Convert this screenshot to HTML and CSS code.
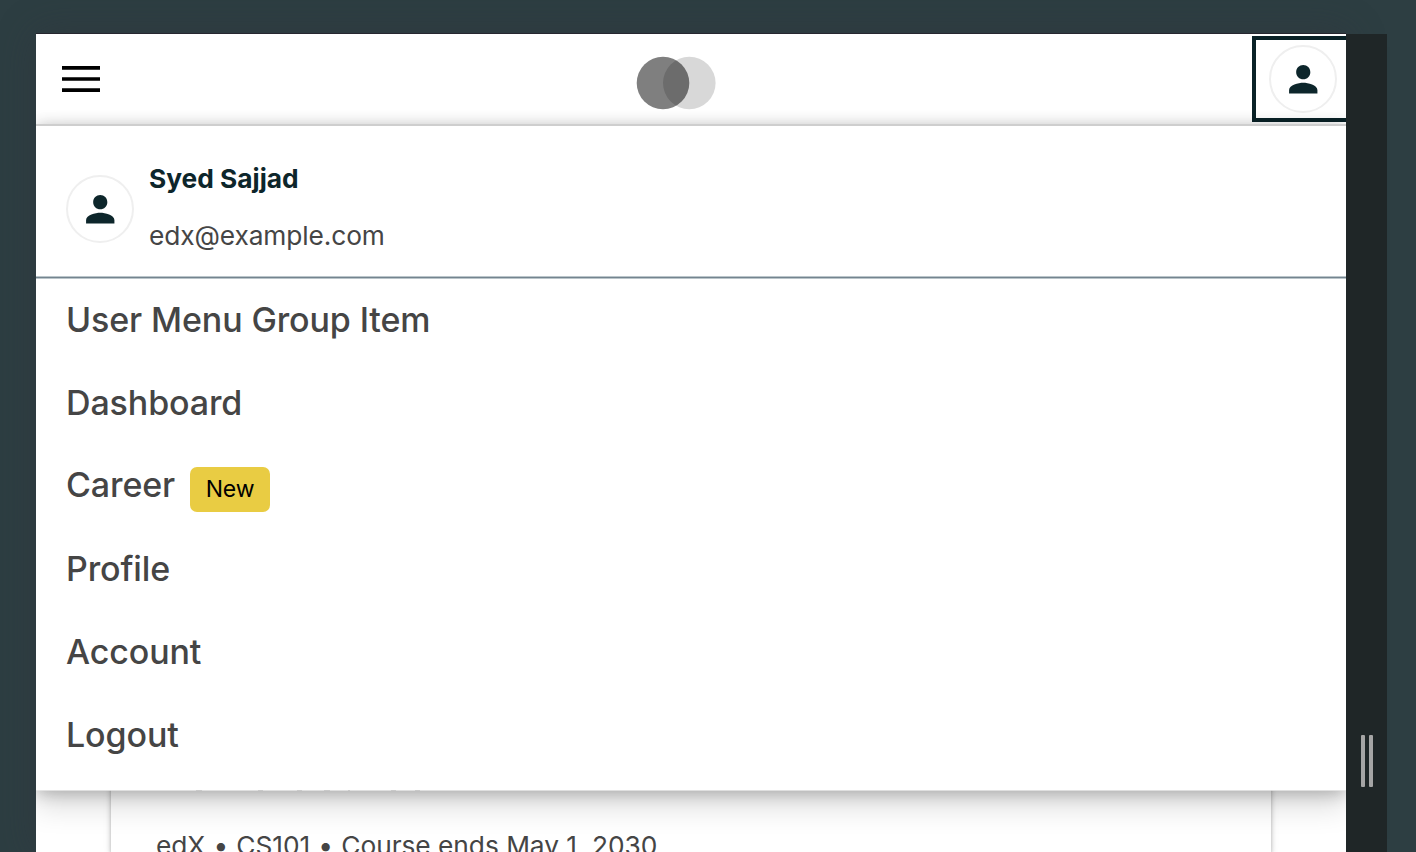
FILE: index.html
```
<!DOCTYPE html>
<html lang="en">
<head>
<meta charset="utf-8">
<title>Dashboard</title>
<link rel="stylesheet" href="styles.css">
</head>
<body>
<div class="stage">
  <div class="device">
    <header class="header">
      <svg class="burger" width="38" height="28" viewBox="0 0 38 28" aria-hidden="true"><path d="M0 2.8h38M0 14h38M0 25.2h38" stroke="#000" stroke-width="3.7"/></svg>
      <svg class="logo" width="80" height="54" viewBox="0 0 80 54" aria-hidden="true"><circle cx="53.3" cy="27" r="26.3" fill="#d8d8d8"/><circle cx="27" cy="27" r="26.3" fill="#000" fill-opacity=".5"/></svg>
      <div class="account-button">
        <div class="avatar"><svg viewBox="0 0 24 24"><path d="M12 12c2.21 0 4-1.79 4-4s-1.79-4-4-4-4 1.79-4 4 1.79 4 4 4zm0 2c-2.67 0-8 1.34-8 4v2h16v-2c0-2.66-5.33-4-8-4z"/></svg></div>
      </div>
    </header>
    <main class="page">
      <section class="card"><svg class="title-edge" width="226" height="1" viewBox="0 0 226 1" aria-hidden="true"><path d="M0 .5h6M62 .5h5M101 .5h5M128 .5h6M152 .5h2M195 .5h5M219 .5h5" stroke="#888"/></svg><p class="course">edX <span class="dot">•</span> CS101 <span class="dot">•</span> Course ends May 1, 2030</p></section>
    </main>
    <nav class="menu">
      <div class="profile">
        <div class="avatar"><svg viewBox="0 0 24 24"><path d="M12 12c2.21 0 4-1.79 4-4s-1.79-4-4-4-4 1.79-4 4 1.79 4 4 4zm0 2c-2.67 0-8 1.34-8 4v2h16v-2c0-2.66-5.33-4-8-4z"/></svg></div>
        <div class="identity"><span class="name">Syed Sajjad</span><span class="email">edx@example.com</span></div>
      </div>
      <ul class="items">
        <li>User Menu Group Item</li>
        <li>Dashboard</li>
        <li class="tagged">Career<span class="badge">New</span></li>
        <li>Profile</li>
        <li>Account</li>
        <li>Logout</li>
      </ul>
    </nav>
  </div>
  <div class="resizer"><span></span><span></span></div>
</div>
</body>
</html>
```
FILE: styles.css
```
* { box-sizing: border-box; }
body {
  margin: 0;
  height: 852px;
  overflow: hidden;
  background: #2d3e42;
  font-family: Inter, "Liberation Sans", sans-serif;
  color: #454545;
}
.stage {
  display: flex;
  width: 1351px;
  height: 818px;
  margin: 34px 0 0 36px;
}
.device {
  position: relative;
  width: 1310px;
  background: #fff;
  box-shadow: 0 0 36px rgba(50, 50, 60, .45), 0 -1px 0 #25252d;
}
.header {
  display: flex;
  align-items: flex-start;
  height: 92px;
  padding-left: 26px;
}
.burger { margin-top: 31px; }
.logo { margin: 22px 0 0 536px; position: relative; left: -.5px; }
.account-button {
  width: 94px;
  height: 86px;
  margin: 2px 0 0 auto;
  padding: 5px 0 0 13px;
  border: 4px solid #0a2227;
  border-right: 0;
}
.avatar {
  display: flex;
  align-items: center;
  justify-content: center;
  flex: none;
  width: 68px;
  height: 68px;
  border: 2px solid #efefef;
  border-radius: 50%;
}
.avatar svg { width: 42.5px; height: 42.5px; flex: none; fill: #0d262b; }
.menu {
  position: absolute;
  top: 90px;
  left: 0;
  width: 1310px;
  height: 667px;
  border-top: 2px solid #cecece;
  border-bottom: 1px solid rgba(235, 235, 235, .75);
  background: #fff;
  background-clip: padding-box;
  box-shadow: 0 15px 28px rgba(0, 0, 0, .15), 0 2px 15px rgba(0, 0, 0, .24);
  clip-path: inset(-60px 0 -60px 0);
}
.profile {
  display: flex;
  gap: 15px;
  height: 152px;
  padding: 49px 0 0 30px;
  border-bottom: 1px solid #74848f;
  box-shadow: 0 1px 0 #bac5ca, inset 0 -1px 0 #bac5ca;
}
.identity { display: flex; flex-direction: column; margin-top: -16px; }
.name { font-size: 26.3px; line-height: 40px; font-weight: 700; color: #0d262b; }
.email { margin-top: 17px; font-size: 26.3px; line-height: 40px; letter-spacing: -.1px; }
.items { margin: 0; padding: 0 0 0 30px; list-style: none; }
.items li {
  display: flex;
  align-items: center;
  height: 83px;
  font-size: 34px;
  font-weight: 480;
  letter-spacing: -.12px;
}
.items .tagged { padding-bottom: 2px; }
.badge {
  height: 45px;
  margin: 9px 0 0 15px;
  padding: 0 15.5px;
  border-radius: 7px;
  background: #e9cc43;
  color: #000;
  font-size: 23px;
  line-height: 44px;
  font-weight: 400;
}
.page { display: flex; justify-content: center; height: 726px; overflow: hidden; }
.card {
  width: 1160px;
  margin-top: 600px;
  padding: 64px 45px 0;
  box-shadow: 0 2px 4px rgba(0, 0, 0, .25), 0 2px 8px rgba(0, 0, 0, .12);
}
.title-edge { display: block; margin-left: 40px; }
.course { margin: 35px 0 0; font-size: 26.3px; line-height: 40px; white-space: nowrap; letter-spacing: -.03px; }
.dot { margin: 0 .75px; }
.resizer {
  display: flex;
  align-items: flex-start;
  gap: 4px;
  width: 41px;
  padding: 701px 0 0 15px;
  background: #1f2627;
  z-index: 1;
}
.resizer span { width: 4px; height: 52px; border-radius: 1px; background: #a5a5a5; }
```
